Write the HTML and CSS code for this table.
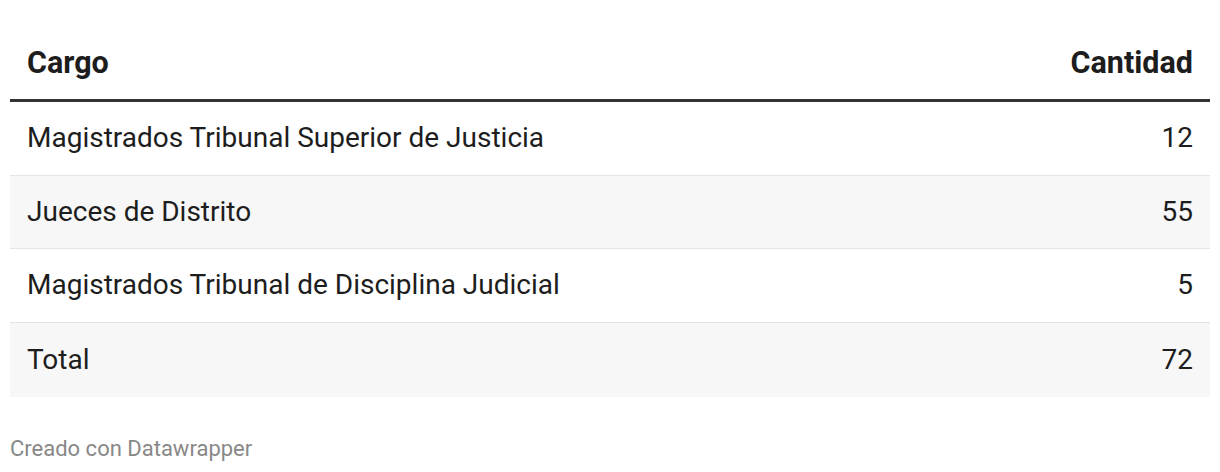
FILE: index.html
```html
<!DOCTYPE html>
<html lang="es">
<head>
<meta charset="utf-8">
<link rel="stylesheet" href="styles.css">
</head>
<body>
<div class="wrap">
  <table class="tbl">
    <thead>
      <tr><th class="left">Cargo</th><th class="right">Cantidad</th></tr>
    </thead>
    <tbody>
      <tr><td class="left">Magistrados Tribunal Superior de Justicia</td><td class="right">12</td></tr>
      <tr class="alt"><td class="left">Jueces de Distrito</td><td class="right">55</td></tr>
      <tr><td class="left">Magistrados Tribunal de Disciplina Judicial</td><td class="right">5</td></tr>
      <tr class="alt last"><td class="left">Total</td><td class="right">72</td></tr>
    </tbody>
  </table>
  <div class="footer">Creado con Datawrapper</div>
</div>
</body>
</html>
```
FILE: styles.css
```css
html, body { margin: 0; padding: 0; background: #fff; }
body { font-family: Roboto, "Liberation Sans", sans-serif; color: #1d1d1d; }
.wrap { padding: 45px 10px 0 10px; }
.tbl { width: 100%; border-collapse: collapse; font-size: 28px; }
.tbl th { font-size: 30.5px; font-weight: 700; line-height: 36px; padding: 0 17px 18px 17px; border-bottom: 3px solid #333; }
.tbl td { line-height: 34.5px; padding: 19px 17px; border-bottom: 1px solid #e5e5e5; }
.tbl tr.last td { border-bottom: none; padding-top: 20px; padding-bottom: 19.5px; }
.tbl tr.alt td { background: #f7f7f7; }
.left { text-align: left; }
.right { text-align: right; }
.footer { margin-top: 38px; font-size: 22px; color: #888; line-height: 28px; }
```
